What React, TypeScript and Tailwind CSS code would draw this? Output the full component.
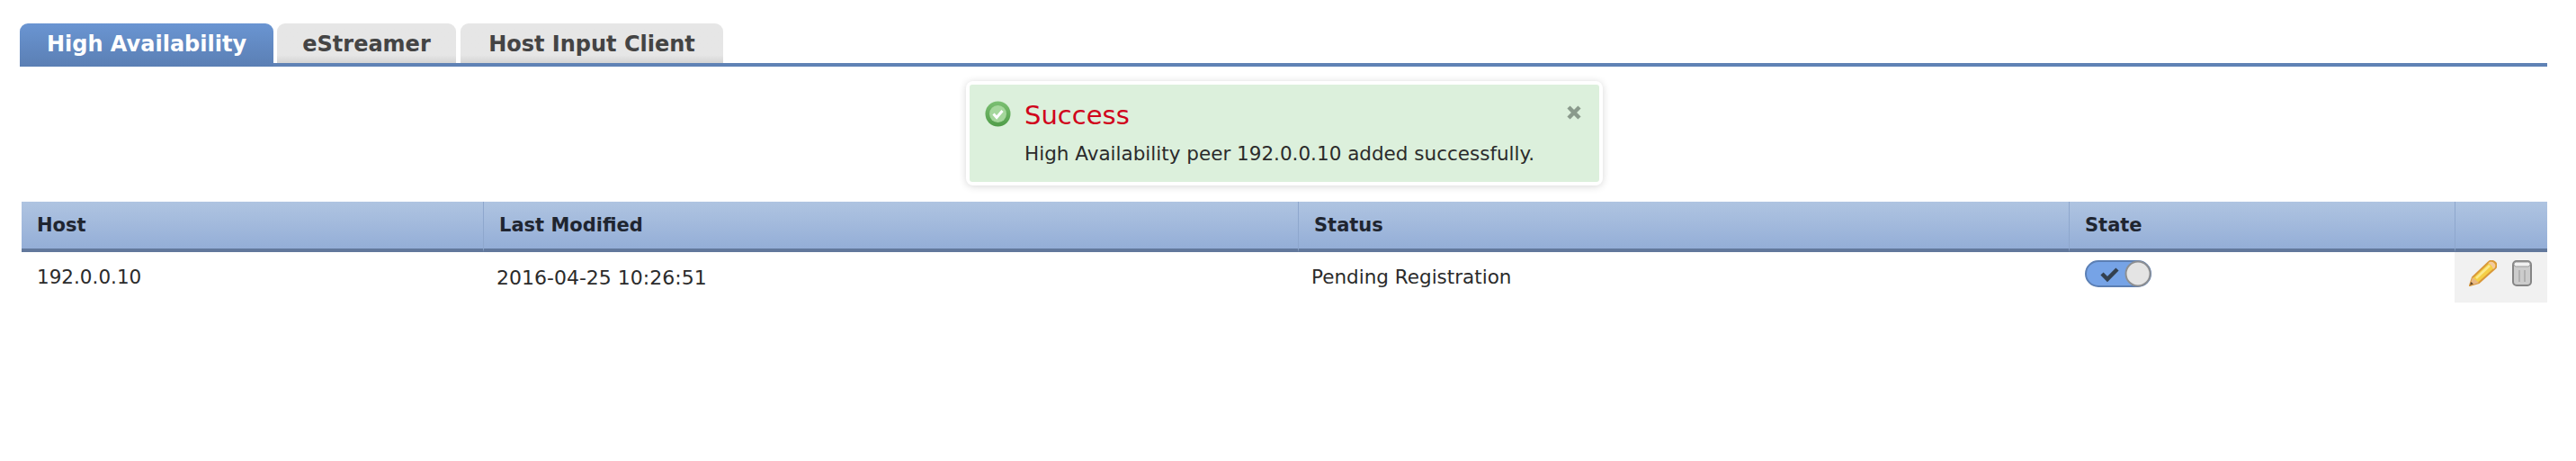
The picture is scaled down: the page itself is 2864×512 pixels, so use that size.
const font = "font-['DejaVu_Sans','Liberation_Sans',sans-serif]";

function CheckCircle() {
  return (
    <svg width="29" height="29" viewBox="0 0 29 29" className="mt-[1px] shrink-0">
      <defs>
        <linearGradient id="okRing" x1="0" y1="0" x2="0" y2="1">
          <stop offset="0" stopColor="#7cc073" />
          <stop offset="1" stopColor="#4f9c48" />
        </linearGradient>
      </defs>
      <circle cx="14.5" cy="14.5" r="14" fill="url(#okRing)" />
      <circle cx="14.5" cy="14.5" r="9.5" fill="#a5d79c" />
      <path d="M9.5 14.5l3.6 4 6.4-7.5" fill="none" stroke="#fff" strokeWidth="3" />
    </svg>
  );
}

function Toggle() {
  return (
    <svg width="74" height="30" viewBox="0 0 74 30" className="block blur-[0.5px]">
      <rect x="1" y="1" width="72" height="28" rx="14" fill="#76a3e6" stroke="#5b7fb4" strokeWidth="2" />
      <path d="M19 15l6 6 11-11" fill="none" stroke="#33404f" strokeWidth="4.5" />
      <circle cx="59" cy="15" r="13.5" fill="#e4e4e4" stroke="#8d8f92" strokeWidth="2" />
    </svg>
  );
}

function Pencil() {
  return (
    <svg width="31" height="29" viewBox="0 0 31 29" className="blur-[0.4px]">
      <path d="M1 28l3-9L22 2c2-2 5-1.500 7 .5s2 4.500 0 6.500L11 25z" fill="#f5cf45" stroke="#d9983a" strokeWidth="2" />
      <path d="M8 20L23 6" stroke="#fbe98c" strokeWidth="2.500" />
      <path d="M21 3.500c2 0 5 2.500 6 6.500l2-2c1-3-2-7-6-6z" fill="#f3c9a0" />
      <path d="M1 28l3-9 7 6z" fill="#e7b985" />
      <path d="M1 28l1.200-4 2.800 2.300z" fill="#6b4a2a" />
    </svg>
  );
}

function Trash() {
  return (
    <svg width="22" height="29" viewBox="0 0 22 29" className="blur-[0.4px]">
      <rect x="1" y="1" width="20" height="27" rx="4" fill="#cccccc" stroke="#858585" strokeWidth="2" />
      <rect x="2" y="2" width="18" height="5" rx="2.500" fill="#f1f1f1" stroke="#9a9a9a" />
      <path d="M8 11v13M14 11v13" stroke="#a6a6a6" strokeWidth="1.500" />
    </svg>
  );
}

function CloseX() {
  return (
    <svg width="18" height="18" viewBox="0 0 18 18" className="mr-[3px] mt-[5px] shrink-0">
      <path d="M3 3l12 12M15 3L3 15" stroke="#8a9a8c" strokeWidth="4.500" />
    </svg>
  );
}

const th = "h-[56px] border-b-[4px] border-b-[#62789c] bg-gradient-to-b from-[#afc4e1] to-[#94aed7] pl-[17px] pt-[2px] text-left font-bold";
const thDivider = "border-l border-l-[#8ea7cd]";

export default function App() {
  return (
    <div className={`${font} h-[512px] w-[2864px] overflow-hidden bg-white pt-[26px] pl-[22px] pr-[32px]`}>
      {/* tabs */}
      <div className="flex h-[48px] gap-[4px] border-b-[4px] border-[#5f82b5]">
        <div className="-mb-[4px] flex h-[48px] w-[282px] items-start justify-center rounded-t-[9px] bg-gradient-to-b from-[#6a95d2] to-[#5b7fb4] pt-[5px] text-[24px] font-bold text-white">
          High Availability
        </div>
        <div className="flex h-[44px] w-[199px] items-start justify-center rounded-t-[9px] bg-gradient-to-b from-[#e6e6e6] from-80% to-[#d4d4d4] pt-[5px] text-[24px] font-bold text-[#444444]">
          eStreamer
        </div>
        <div className="ml-[1px] flex h-[44px] w-[292px] items-start justify-center rounded-t-[9px] bg-gradient-to-b from-[#e6e6e6] from-80% to-[#d4d4d4] pt-[5px] text-[24px] font-bold text-[#444444]">
          Host Input Client
        </div>
      </div>

      {/* success message */}
      <div className="ml-[2px] mt-[16px] flex justify-center">
        <div className="h-[116px] w-[708px] rounded-[8px] bg-white p-[4px] shadow-[0_1px_8px_rgba(0,0,0,0.16)]">
          <div className="flex h-full gap-[15px] rounded-[3px] bg-[#dcf0dc] pl-[17px] pr-[16px] pt-[17px]">
            <CheckCircle />
            <div className="flex-1">
              <div className="mt-[2px] text-[29px] leading-[30px] text-[#d0021b]">Success</div>
              <div className="mt-[15px] text-[21.5px] leading-[26px] text-[#2b2b2b]">
                High Availability peer 192.0.0.10 added successfully.
              </div>
            </div>
            <CloseX />
          </div>
        </div>
      </div>

      {/* table */}
      <table className="ml-[2px] mt-[18px] w-[2808px] table-fixed border-separate border-spacing-0 text-[21.5px]">
        <thead>
          <tr className="text-[21px] text-[#1f2530]">
            <th className={`${th} w-[513px]`}>Host</th>
            <th className={`${th} ${thDivider} w-[906px]`}>Last Modified</th>
            <th className={`${th} ${thDivider} w-[857px]`}>Status</th>
            <th className={`${th} ${thDivider} w-[429px]`}>State</th>
            <th className={`${th} ${thDivider} w-[103px]`}></th>
          </tr>
        </thead>
        <tbody>
          <tr className="h-[56px] text-[#2b2b2b]">
            <td className="pl-[17px]">192.0.0.10</td>
            <td className="pl-[15px] text-[22px]">2016-04-25 10:26:51</td>
            <td className="pl-[15px]">Pending Registration</td>
            <td className="pl-[18px] pb-[8px]">
              <Toggle />
            </td>
            <td className="bg-[#f1f1f1]">
              <div className="flex items-start gap-[17px] pb-[9px] pl-[16px]">
                <Pencil />
                <Trash />
              </div>
            </td>
          </tr>
        </tbody>
      </table>
    </div>
  );
}
